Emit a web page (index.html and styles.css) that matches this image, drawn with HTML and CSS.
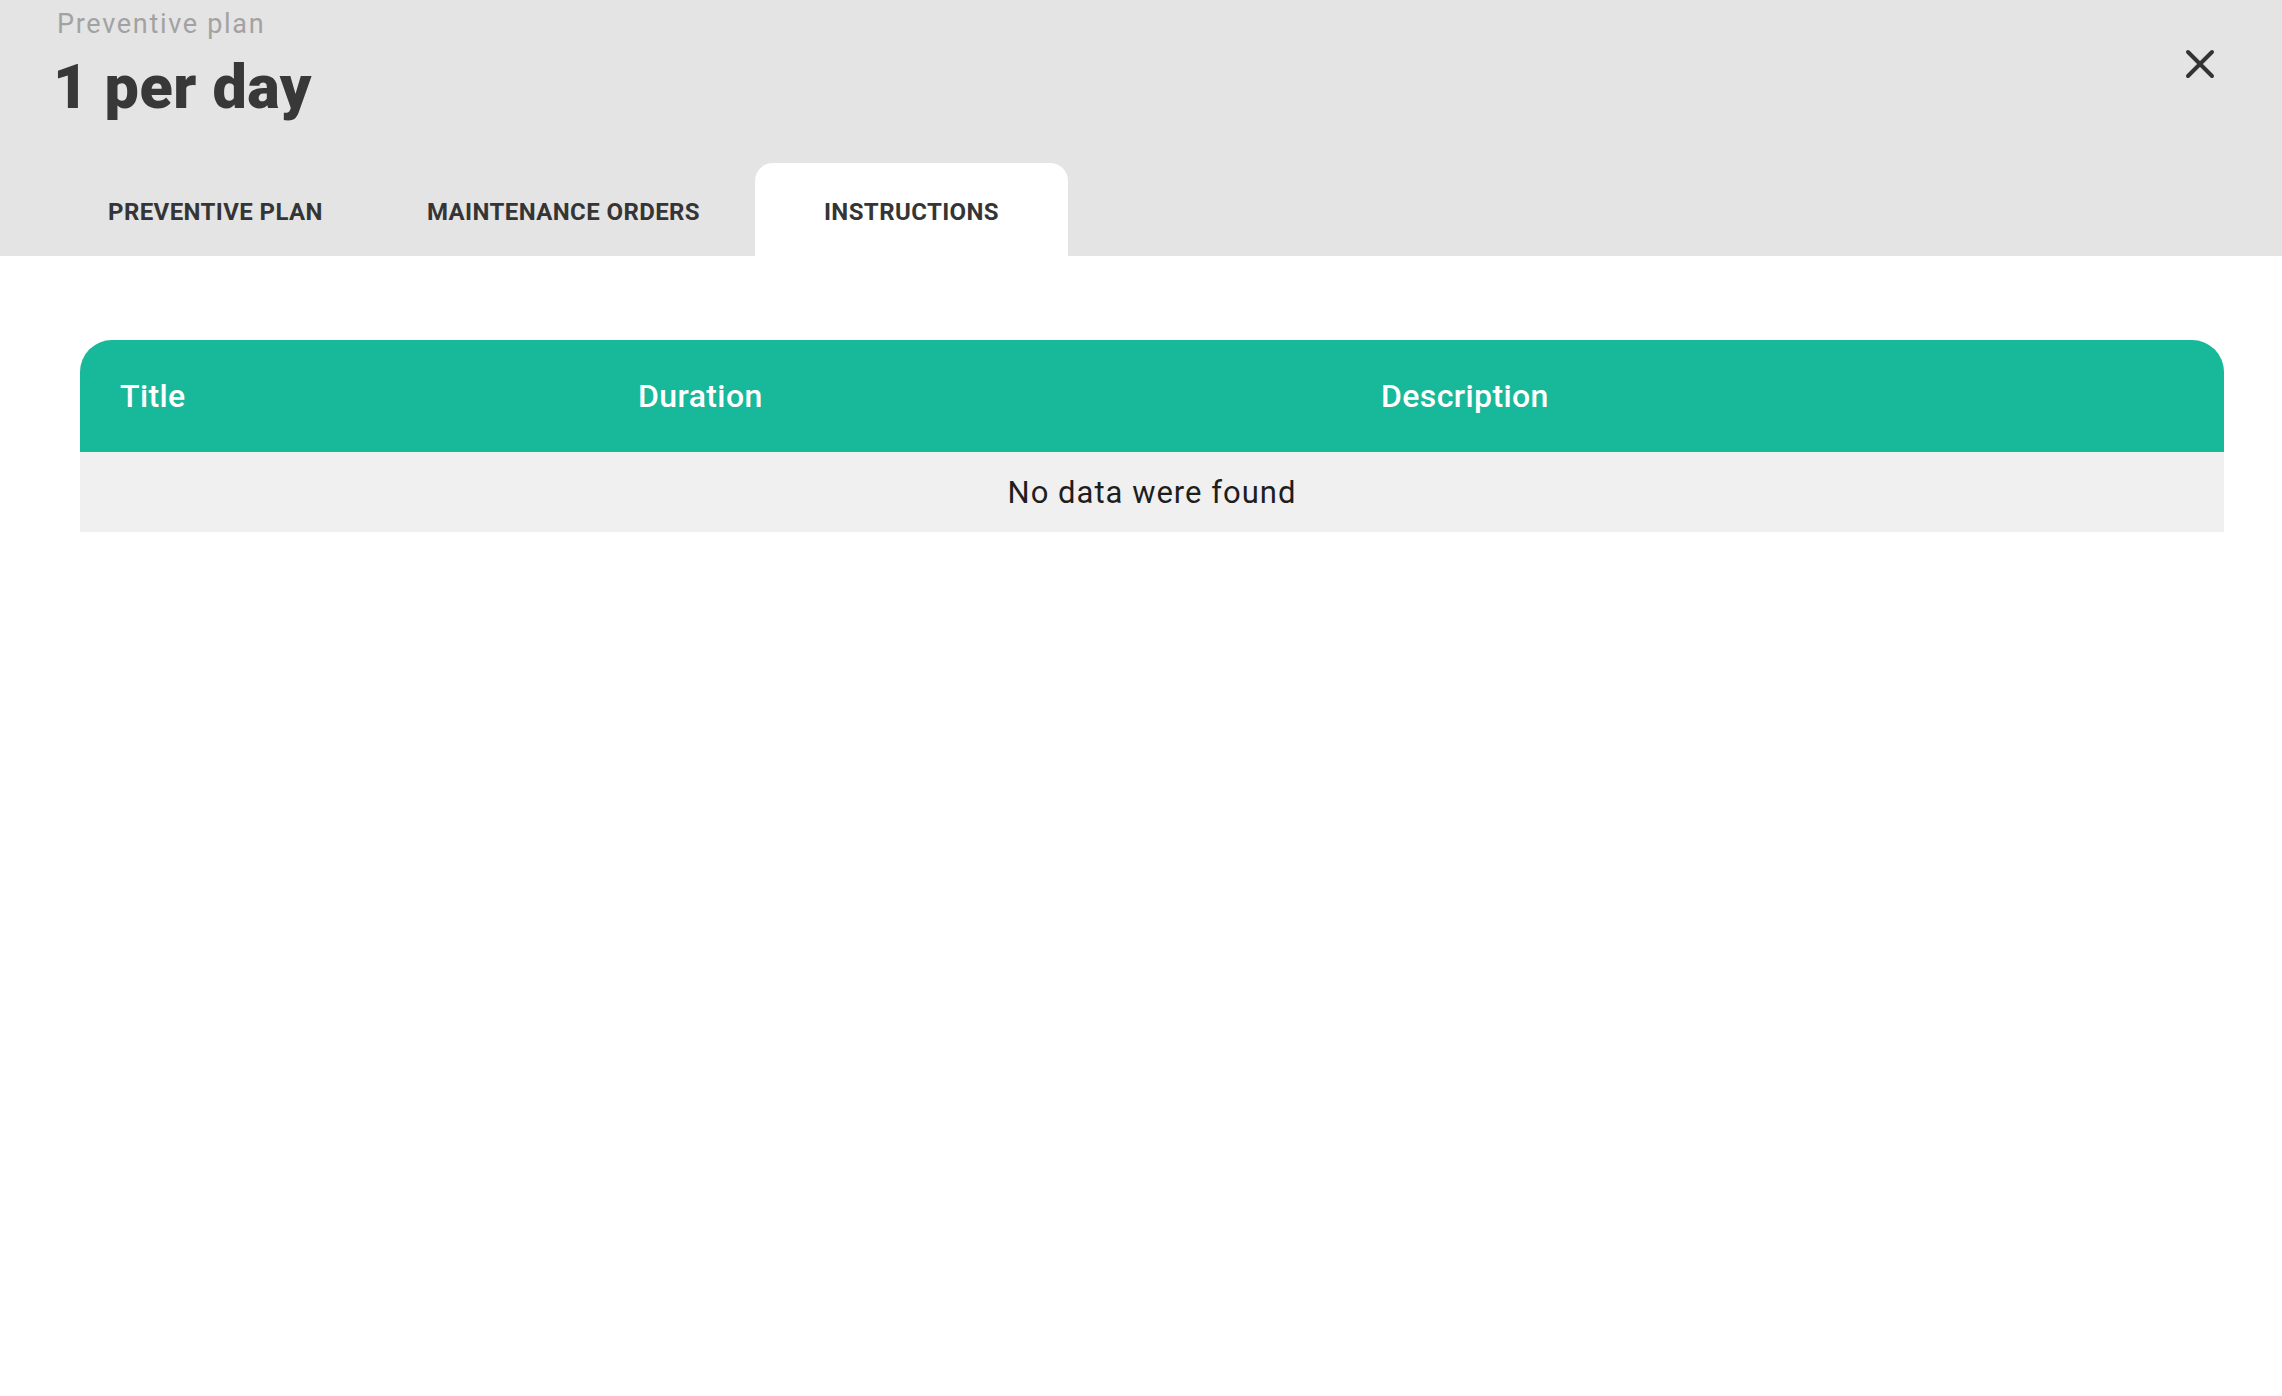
FILE: index.html
```html
<!DOCTYPE html>
<html>

<head>
    <title>Preventive plan - 1 per day</title>
    <link rel="stylesheet" href="styles.css">
</head>

<body>

    <div class="modal-header">
        <div class="header-top">
            <div class="heading">
                <p class="subtitle">Preventive plan</p>
                <h1 class="title">1 per day</h1>
            </div>
            <button type="button" class="close-btn" title="Close">
                <svg width="30" height="30" viewBox="0 0 30 30">
                    <path d="M3 3 L27 27 M27 3 L3 27" stroke="#333" stroke-width="4" stroke-linecap="round" fill="none"/>
                </svg>
            </button>
        </div>

        <div class="tabs">
            <div class="tab">PREVENTIVE PLAN</div>
            <div class="tab">MAINTENANCE ORDERS</div>
            <div class="tab active">INSTRUCTIONS</div>
        </div>
    </div>

    <div class="content">
        <table class="data-table">
            <colgroup>
                <col class="col-title">
                <col class="col-duration">
                <col>
            </colgroup>
            <thead>
                <tr>
                    <th>Title</th>
                    <th>Duration</th>
                    <th>Description</th>
                </tr>
            </thead>
            <tbody>
                <tr>
                    <td colspan="3" class="empty">No data were found</td>
                </tr>
            </tbody>
        </table>
    </div>

</body>

</html>
```

FILE: styles.css
```css
body {
    margin: 0;
    background: #ffffff;
    font-family: Roboto, "Noto Sans", sans-serif;
}

.modal-header {
    background: #e4e4e4;
    height: 256px;
}

.header-top {
    display: flex;
    justify-content: space-between;
    align-items: flex-start;
    padding: 9px 67px 0 53px;
}

.subtitle {
    margin: 0 0 0 4px;
    font-size: 27px;
    line-height: 30px;
    color: #a2a2a2;
    letter-spacing: 1.7px;
}

.title {
    margin: 13px 0 0 0;
    font-size: 61px;
    line-height: 70px;
    font-weight: 900;
    color: #383838;
    letter-spacing: 0.5px;
}

.close-btn {
    background: none;
    border: none;
    padding: 0;
    margin-top: 40px;
    width: 30px;
    height: 30px;
    cursor: pointer;
}

.close-btn svg {
    display: block;
}

.tabs {
    display: flex;
    gap: 35px;
    padding-left: 59px;
    margin-top: 41px;
}

.tab {
    width: 313px;
    height: 95px;
    padding-top: 1px;
    display: flex;
    align-items: center;
    justify-content: center;
    font-size: 24px;
    font-weight: 700;
    color: #353535;
    letter-spacing: 0.4px;
    border-radius: 18px 18px 0 0;
}

.tab.active {
    background: #ffffff;
}

.content {
    padding: 84px 58px 0 80px;
}

.data-table {
    width: 100%;
    border-collapse: separate;
    border-spacing: 0;
    table-layout: fixed;
}

.col-title {
    width: 518px;
}

.col-duration {
    width: 743px;
}

.data-table th {
    background: #18b99a;
    color: #ffffff;
    font-size: 32px;
    font-weight: 500;
    text-align: left;
    height: 112px;
    padding: 0 0 0 40px;
    letter-spacing: 0.4px;
}

.data-table th:first-child {
    border-top-left-radius: 32px;
}

.data-table th:last-child {
    border-top-right-radius: 32px;
}

.data-table td {
    background: #f0f0f0;
    height: 80px;
    padding: 0;
}

.empty {
    text-align: center;
    font-size: 31px;
    color: #1e1e1e;
    letter-spacing: 1px;
}
```
